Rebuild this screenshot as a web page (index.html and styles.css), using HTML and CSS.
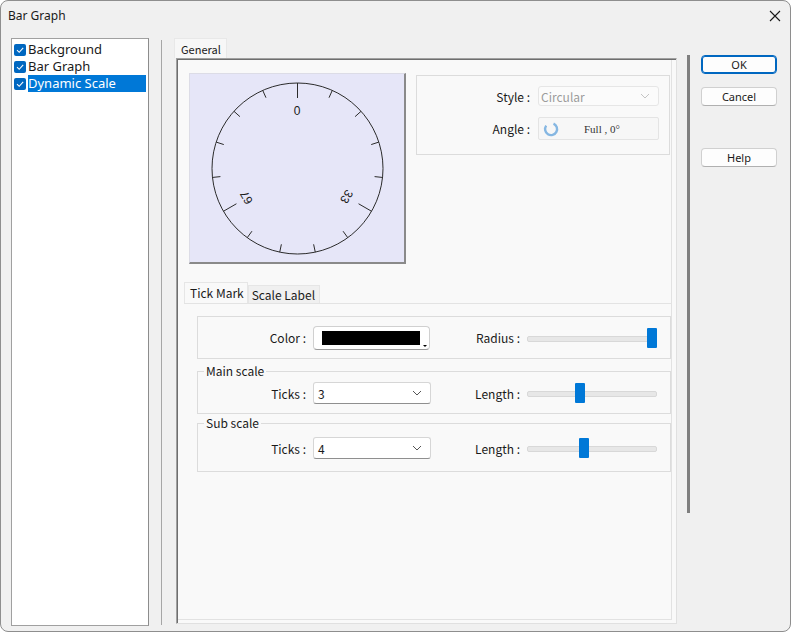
FILE: index.html
```html
<!DOCTYPE html>
<html lang="en">
<head>
    <meta charset="UTF-8">
    <meta name="viewport" content="width=device-width, initial-scale=1.0">
    <title>Bar Graph</title>
    <link rel="stylesheet" href="styles.css">
</head>
<body>
<div class="window">
    <div class="titlebar">
        <span class="title">Bar Graph</span>
        <svg class="close" width="12" height="12" viewBox="0 0 12 12">
            <path d="M1 1 L11 11 M11 1 L1 11" stroke="#1a1a1a" stroke-width="1.1" fill="none"/>
        </svg>
    </div>

    <div class="dialog">
        <ul class="tree">
            <li><span class="check"><svg width="12" height="12" viewBox="0 0 12 12"><path d="M3 6.2 L5.2 8.3 L9.2 3.9" stroke="#fff" stroke-width="1.1" fill="none"/></svg></span>Background</li>
            <li><span class="check"><svg width="12" height="12" viewBox="0 0 12 12"><path d="M3 6.2 L5.2 8.3 L9.2 3.9" stroke="#fff" stroke-width="1.1" fill="none"/></svg></span>Bar Graph</li>
            <li class="selected"><span class="check"><svg width="12" height="12" viewBox="0 0 12 12"><path d="M3 6.2 L5.2 8.3 L9.2 3.9" stroke="#fff" stroke-width="1.1" fill="none"/></svg></span><span class="label">Dynamic Scale</span></li>
        </ul>

        <div class="splitter"></div>

        <div class="main">
            <div class="tabs">
                <div class="tab active">General</div>
            </div>
            <div class="page">
                <div class="top-row">
                    <div class="preview">
                        <svg width="214" height="188" viewBox="1 1 214 188">
                            <g stroke="#2b2b2b" stroke-width="1" fill="none">
                                <circle cx="108.5" cy="95.5" r="85.5"/>
                                <!-- main ticks -->
                                <line x1="108.5" y1="10" x2="108.5" y2="25"/>
                                <line x1="182.55" y1="138.25" x2="169.55" y2="130.75"/>
                                <line x1="34.45" y1="138.25" x2="47.45" y2="130.75"/>
                                <!-- sub ticks -->
                                <line x1="143.27" y1="17.39" x2="140.02" y2="24.7"/>
                                <line x1="172.04" y1="38.29" x2="166.09" y2="43.64"/>
                                <line x1="189.82" y1="69.08" x2="182.21" y2="71.55"/>
                                <line x1="193.53" y1="104.44" x2="185.57" y2="103.6"/>
                                <line x1="158.76" y1="164.67" x2="154.05" y2="158.2"/>
                                <line x1="126.28" y1="179.13" x2="124.61" y2="171.3"/>
                                <line x1="90.72" y1="179.13" x2="92.39" y2="171.3"/>
                                <line x1="58.24" y1="164.67" x2="62.95" y2="158.2"/>
                                <line x1="23.47" y1="104.44" x2="31.43" y2="103.6"/>
                                <line x1="27.18" y1="69.08" x2="34.79" y2="71.55"/>
                                <line x1="44.96" y1="38.29" x2="50.91" y2="43.64"/>
                                <line x1="73.73" y1="17.39" x2="76.98" y2="24.7"/>
                            </g>
                            <g class="dial-label">
                                <text x="108" y="37.5">0</text>
                                <text x="157.5" y="123.5" transform="rotate(120 157.5 123.5)">33</text>
                                <text x="57.5" y="124.5" transform="rotate(240 57.5 124.5)">67</text>
                            </g>
                        </svg>
                    </div>

                    <div class="style-box">
                        <div class="field">
                            <label>Style :</label>
                            <div class="combo disabled">
                                <span>Circular</span>
                                <svg width="10" height="6" viewBox="0 0 10 6"><path d="M1 1 L5 5 L9 1" stroke="#c4c4c4" fill="none"/></svg>
                            </div>
                        </div>
                        <div class="field">
                            <label>Angle :</label>
                            <div class="angle-box">
                                <svg width="16" height="16" viewBox="0 0 16 16"><path d="M10.5 2.6 A6 6 0 1 1 3.2 4.6" stroke="#86b7e2" stroke-width="2.4" fill="none"/></svg>
                                <span>Full , 0°</span>
                            </div>
                        </div>
                    </div>
                </div>

                <div class="subtabs">
                    <div class="subtab active">Tick Mark</div>
                    <div class="subtab">Scale Label</div>
                </div>
                <div class="subpage">
                    <div class="group">
                        <div class="row">
                            <label>Color :</label>
                            <div class="color-btn">
                                <span class="swatch"></span>
                                <span class="caret"></span>
                            </div>
                            <label>Radius :</label>
                            <div class="slider"><span class="thumb" style="left: 120px"></span></div>
                        </div>
                    </div>

                    <fieldset class="scale">
                        <legend>Main scale</legend>
                        <div class="row">
                            <label>Ticks :</label>
                            <div class="combo">
                                <span>3</span>
                                <svg width="10" height="6" viewBox="0 0 10 6"><path d="M1 1 L5 5 L9 1" stroke="#555" fill="none"/></svg>
                            </div>
                            <label>Length :</label>
                            <div class="slider"><span class="thumb" style="left: 48px"></span></div>
                        </div>
                    </fieldset>

                    <fieldset class="scale sub">
                        <legend>Sub scale</legend>
                        <div class="row">
                            <label>Ticks :</label>
                            <div class="combo">
                                <span>4</span>
                                <svg width="10" height="6" viewBox="0 0 10 6"><path d="M1 1 L5 5 L9 1" stroke="#555" fill="none"/></svg>
                            </div>
                            <label>Length :</label>
                            <div class="slider"><span class="thumb" style="left: 52px"></span></div>
                        </div>
                    </fieldset>
                </div>
            </div>
        </div>

        <div class="scrollbar"></div>

        <div class="buttons">
            <button class="default">OK</button>
            <button>Cancel</button>
            <button class="help">Help</button>
        </div>
    </div>
</div>
</body>
</html>
```

FILE: styles.css
```css
* {
    box-sizing: border-box;
}

body {
    margin: 0;
    background: #ffffff;
    font-family: 'Noto Sans', 'Liberation Sans', sans-serif;
    color: #1a1a1a;
}

.window {
    width: 791px;
    height: 632px;
    background-color: #f0f0f0;
    border: 1px solid #8e8e8e;
    border-radius: 8px;
    overflow: hidden;
}

.titlebar {
    height: 29px;
    display: flex;
    align-items: center;
    justify-content: space-between;
    padding: 0 9px 0 7px;
}
.title {
    font-size: 12px;
}

.dialog {
    display: flex;
    padding: 8px 0 0 10px;
}

/* left tree */
.tree {
    list-style: none;
    margin: 0;
    padding: 2px 2px 1px 2px;
    width: 138px;
    height: 588px;
    background: #ffffff;
    border: 1px solid #a0a0a0;
    border-right-color: #8c8c8c;
}
.tree li {
    height: 17px;
    display: flex;
    align-items: center;
    font-size: 13px;
    line-height: 17px;
    white-space: nowrap;
    overflow: hidden;
}
.check {
    width: 12px;
    height: 12px;
    background: #0067c0;
    border-radius: 2px;
    display: flex;
    margin-right: 2px;
    flex-shrink: 0;
}
.tree li.selected .label {
    background: #0078d7;
    color: #ffffff;
    flex: 1;
}

.splitter {
    width: 1px;
    height: 585px;
    margin: 2px 0 0 12px;
    background: #a6a6a6;
}

/* tab area */
.main {
    margin-left: 12px;
    width: 505px;
}
.tabs {
    display: flex;
    height: 20px;
}
.tab {
    font-size: 11px;
    font-family: 'Noto Sans CJK TC', 'Noto Sans', sans-serif;
    padding: 2px 5px 0 6px;
    background: #f7f7f7;
    border: 1px solid #e8e8e8;
    border-bottom: none;
}
.page {
    margin-left: 2px;
    width: 501px;
    height: 566px;
    background: #f9f9f9;
    border: 1px solid #e0e0e0;
    border-top-color: #a0a0a0;
    border-left-color: #a0a0a0;
    box-shadow: inset 1px 1px 0 #6e6e6e, inset -4px -3px 0 #f9f9f9, inset -5px -4px 0 #e2e2e2;
    padding: 14px 0 0 7px;
}

.top-row {
    display: flex;
    align-items: flex-start;
}
.preview {
    width: 217px;
    height: 191px;
    margin-left: 5px;
    background: #e6e6f8;
    border-top: 1px solid #dcdce6;
    border-left: 1px solid #dcdce6;
    border-right: 2px solid #8a8a8a;
    border-bottom: 2px solid #8a8a8a;
}
.preview svg {
    display: block;
}
.dial-label text {
    font-family: 'Liberation Sans', sans-serif;
    font-size: 12px;
    fill: #1a1a1a;
    text-anchor: middle;
    dominant-baseline: central;
}

.style-box {
    margin: 2px 0 0 10px;
    width: 254px;
    height: 80px;
    border: 1px solid #dcdcdc;
    padding-top: 10px;
}
.field {
    display: flex;
    align-items: center;
    margin-bottom: 11px;
}
.field label {
    width: 113px;
    text-align: right;
    margin-right: 8px;
    font-size: 12px;
    font-family: 'Noto Sans CJK TC', 'Noto Sans', sans-serif;
}

.combo {
    display: flex;
    align-items: center;
    justify-content: space-between;
    width: 118px;
    height: 22px;
    padding: 0 8px 0 4px;
    background: #ffffff;
    border: 1px solid #d6d6d6;
    border-bottom-color: #8f8f8f;
    border-radius: 3px;
    font-size: 12px;
    font-family: 'Noto Sans CJK TC', 'Noto Sans', sans-serif;
}
.combo.disabled {
    width: 121px;
    height: 20px;
    padding-left: 2px;
    background: #fbfbfb;
    border-color: #e6e6e6;
    color: #9c9c9c;
}
.angle-box {
    display: flex;
    align-items: center;
    width: 121px;
    height: 23px;
    padding-left: 4px;
    background: #f7f7f7;
    border: 1px solid #e4e4e4;
    border-radius: 2px;
}
.angle-box span {
    font-family: 'Liberation Serif', serif;
    font-size: 11px;
    margin-left: 25px;
    color: #333333;
}

/* inner tabs */
.subtabs {
    display: flex;
    align-items: flex-end;
    margin-top: 18px;
    height: 21px;
}
.subtab {
    font-size: 12px;
    font-family: 'Noto Sans CJK TC', 'Noto Sans', sans-serif;
    height: 18px;
    line-height: 17px;
    padding: 0 4px 0 3px;
    background: #f0f0f0;
    border: 1px solid #e6e6e6;
    border-bottom: none;
}
.subtab.active {
    height: 21px;
    line-height: 19px;
    background: #f9f9f9;
    padding: 0 3px 0 5px;
}
.subpage {
    width: 488px;
    border-top: 1px solid #e3e3e3;
    padding: 12px 1px 0 13px;
}

.group {
    height: 43px;
    border: 1px solid #dcdcdc;
    display: flex;
    align-items: center;
}
.row {
    display: grid;
    grid-template-columns: 108px 117px 83px 130px;
    column-gap: 7px;
    align-items: center;
    width: 100%;
}
.row label {
    text-align: right;
    font-size: 12px;
    font-family: 'Noto Sans CJK TC', 'Noto Sans', sans-serif;
}

.color-btn {
    position: relative;
    height: 24px;
    background: #ffffff;
    border: 1px solid #d0d0d0;
    border-bottom-color: #9a9a9a;
    border-radius: 4px;
    display: flex;
    align-items: center;
    padding-left: 8px;
}
.swatch {
    width: 98px;
    height: 14px;
    background: #000000;
}
.caret {
    position: absolute;
    right: 2px;
    bottom: 2px;
    border-left: 2px solid transparent;
    border-right: 2px solid transparent;
    border-top: 2px solid #000;
}

.slider {
    position: relative;
    height: 20px;
    width: 130px;
}
.slider::before {
    content: "";
    position: absolute;
    left: 0;
    right: 0;
    top: 8px;
    height: 4px;
    background: #e7e7e7;
    border: 1px solid #d8d8d8;
    border-radius: 2px;
}
.thumb {
    position: absolute;
    top: 0;
    width: 10px;
    height: 20px;
    background: #0078d7;
    border-radius: 1px;
}

fieldset.scale {
    margin: 5px 0 0 0;
    padding: 0 0 9px 0;
    border: 1px solid #dcdcdc;
    min-inline-size: 0;
}
fieldset.scale.sub {
    margin-top: 2px;
    padding-bottom: 12px;
}
fieldset.scale legend {
    margin-left: 6px;
    padding: 0 2px;
    font-size: 12px;
    line-height: 14px;
    font-family: 'Noto Sans CJK TC', 'Noto Sans', sans-serif;
}
fieldset.scale .row {
    margin-top: 4px;
}
fieldset.scale.sub .row {
    margin-top: 7px;
}

.scrollbar {
    width: 3px;
    height: 458px;
    margin: 17px 0 0 8px;
    background: #7f7f7f;
}

/* buttons */
.buttons {
    margin-left: 11px;
    padding-top: 17px;
    display: flex;
    flex-direction: column;
    width: 76px;
}
.buttons button {
    height: 19px;
    padding: 0;
    font-family: 'Noto Sans', sans-serif;
    font-size: 11px;
    color: #1a1a1a;
    background: #fdfdfd;
    border: 1px solid #d0d0d0;
    border-bottom-color: #b0b0b0;
    border-radius: 4px;
    margin-bottom: 13px;
}
.buttons button.default {
    border: 1px solid #0067c0;
    box-shadow: inset 0 0 0 1px #0067c0;
}
.buttons button.help {
    margin-top: 29px;
}
```
